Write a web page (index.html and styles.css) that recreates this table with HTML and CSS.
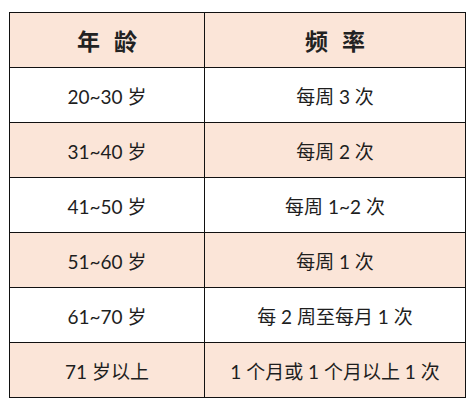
FILE: index.html
```html
<!DOCTYPE html>
<html lang="zh">
<head>
<meta charset="utf-8">
<title>年龄与频率</title>
<link rel="stylesheet" href="styles.css">
</head>
<body>
<div class="wrap">
<table class="freq">
  <colgroup><col class="c1"><col class="c2"></colgroup>
  <thead>
    <tr class="peach"><th>年 龄</th><th>频 率</th></tr>
  </thead>
  <tbody>
    <tr><td>20~30 岁</td><td>每周 3 次</td></tr>
    <tr class="peach"><td>31~40 岁</td><td>每周 2 次</td></tr>
    <tr><td>41~50 岁</td><td>每周 1~2 次</td></tr>
    <tr class="peach"><td>51~60 岁</td><td>每周 1 次</td></tr>
    <tr><td>61~70 岁</td><td>每 2 周至每月 1 次</td></tr>
    <tr class="peach"><td>71 岁以上</td><td>1 个月或 1 个月以上 1 次</td></tr>
  </tbody>
</table>
</div>
</body>
</html>
```

FILE: styles.css
```css
html, body {
  margin: 0;
  padding: 0;
  background: #ffffff;
}
.wrap {
  padding: 12px 0 0 9px;
}
.freq {
  border-collapse: collapse;
  table-layout: fixed;
  width: 456px;
  font-family: Lato, "Noto Sans CJK SC", sans-serif;
  color: #1e1e1e;
}
.c1 { width: 195px; }
.c2 { width: 261px; }
.freq th, .freq td {
  border: 1px solid #111111;
  height: 54px;
  padding: 0;
  text-align: center;
  vertical-align: middle;
}
.freq th {
  font-family: "Noto Sans CJK SC", sans-serif;
  font-size: 23px;
  font-weight: 700;
  word-spacing: 9px;
  color: #222222;
}
.freq td {
  font-size: 19px;
  font-weight: 400;
}
.peach {
  background: #fbe5d8;
}
```
